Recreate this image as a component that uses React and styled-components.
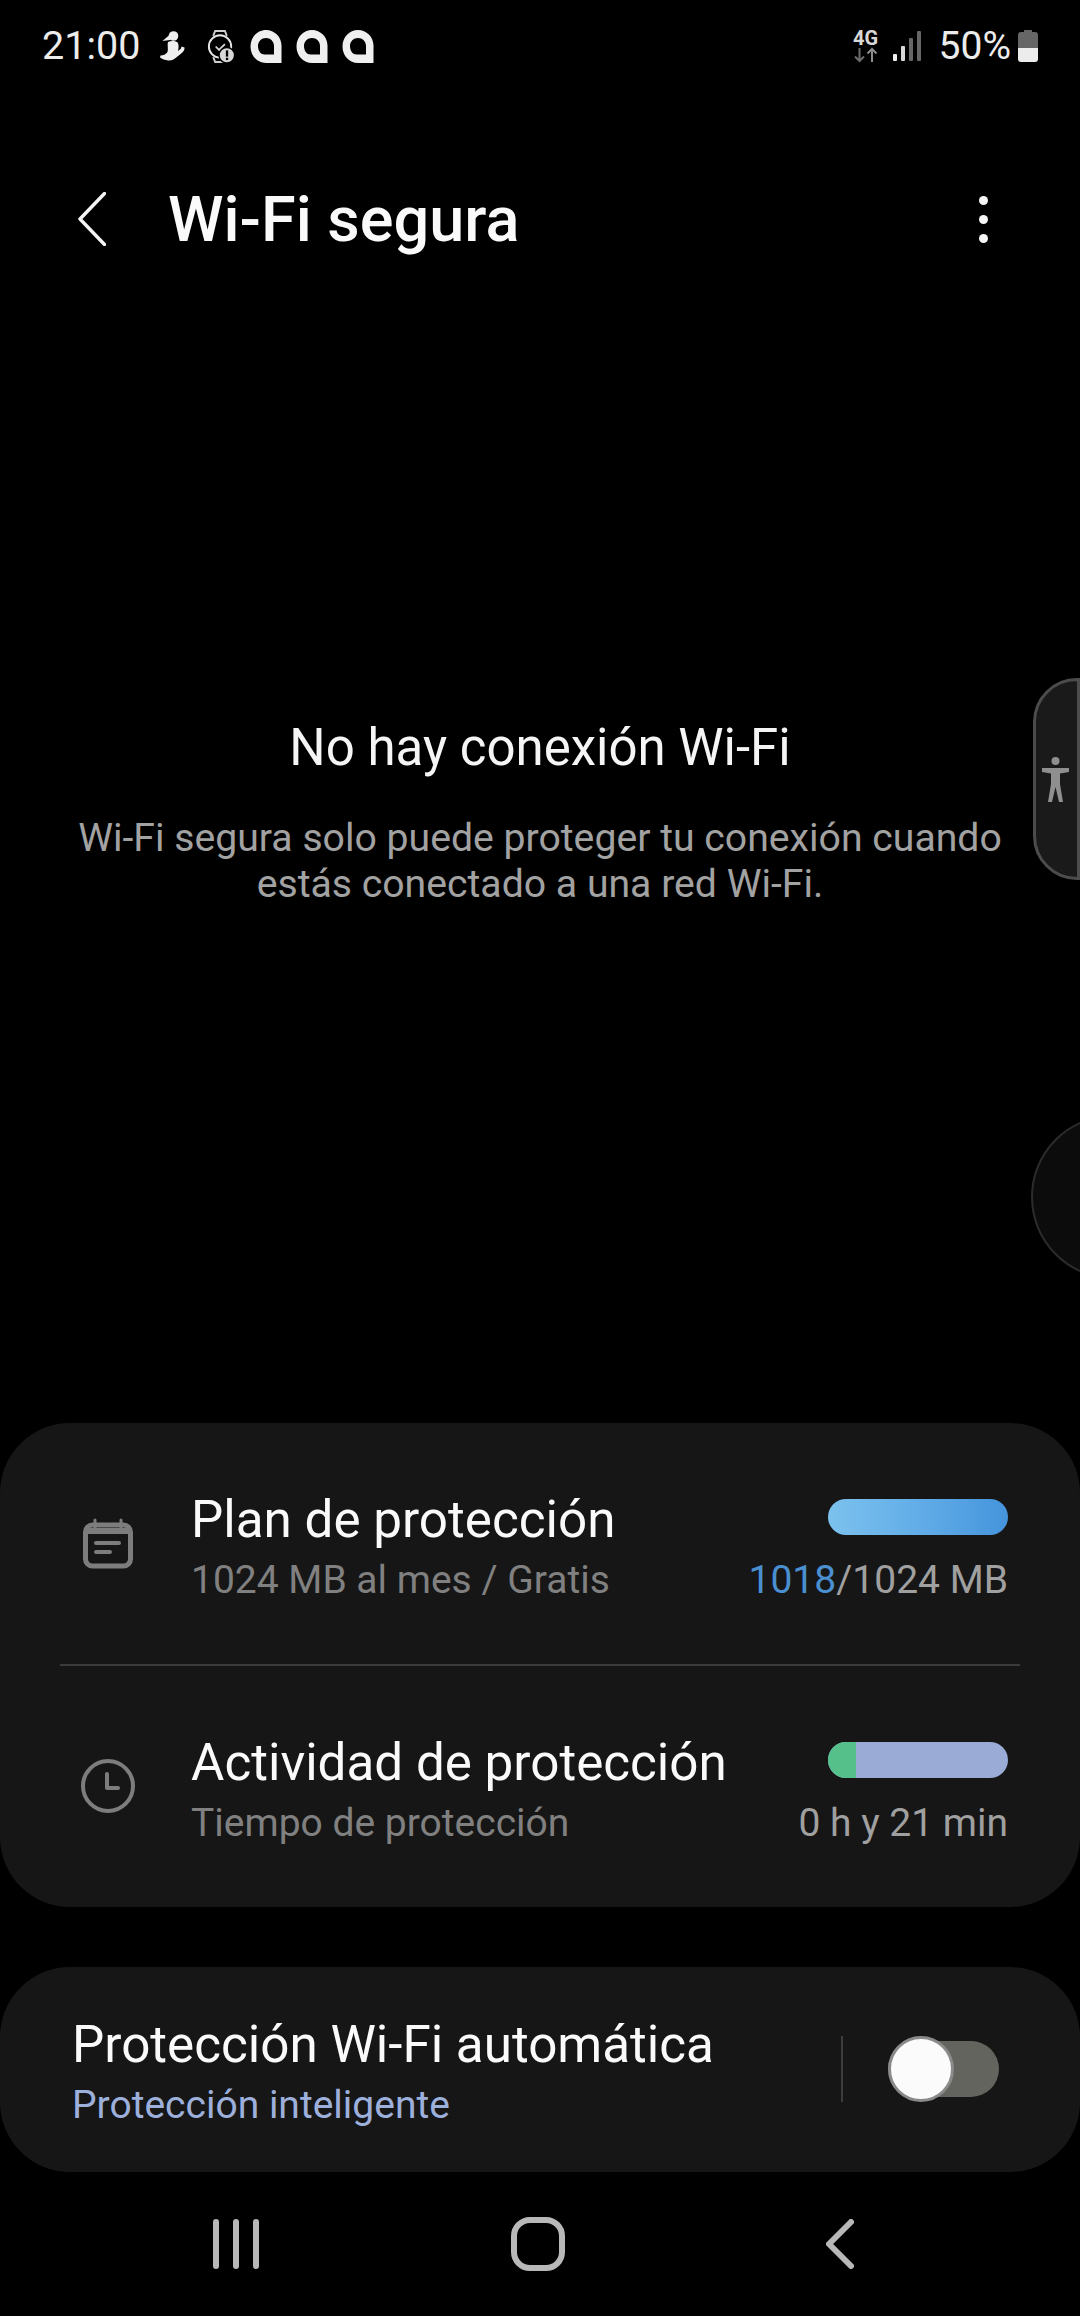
import React from "react";
import styled, { createGlobalStyle } from "styled-components";

const Global = createGlobalStyle`
  html, body { margin: 0; padding: 0; background: #000; }
  body { font-family: Roboto, "Liberation Sans", sans-serif; }
  * { box-sizing: border-box; }
`;

const Page = styled.div`
  position: relative;
  width: 1080px;
  height: 2316px;
  background: #000;
  display: flex;
  flex-direction: column;
  overflow: hidden;
`;

const StatusBar = styled.div`
  height: 92px;
  padding: 0 42px;
  display: flex;
  align-items: center;
  justify-content: space-between;
  color: #ececec;
`;
const StatusGroup = styled.div`
  display: flex;
  align-items: center;
`;
const StatusText = styled.span`
  font-size: ${(p) => p.$size || 39.5}px;
  line-height: 44px;
  font-weight: 400;
  color: #ececec;
  margin-left: ${(p) => p.$ml || 0}px;
`;
const StatusIcon = styled.svg`
  display: block;
  flex: none;
  margin-left: ${(p) => p.$ml || 0}px;
`;
const NetBadge = styled.div`
  width: 28px;
  display: flex;
  flex-direction: column;
  align-items: center;
  margin-right: 13px;
`;
const NetLabel = styled.span`
  font-size: 20px;
  line-height: 17px;
  font-weight: 700;
  color: #d8d8d8;
`;

const Header = styled.header`
  margin-top: 52px;
  height: 150px;
  padding: 0 76px 0 78px;
  display: flex;
  align-items: center;
`;
const BackChevron = styled.svg`
  flex: none;
`;
const Title = styled.h1`
  margin: 0 0 0 62px;
  padding-top: 2px;
  flex: 1;
  font-size: 63px;
  line-height: 72px;
  font-weight: 500;
  color: #fafafa;
`;
const Dots = styled.div`
  display: flex;
  flex-direction: column;
  gap: 10px;
  margin-right: 16px;
`;
const Dot = styled.span`
  width: 9px;
  height: 9px;
  border-radius: 50%;
  background: #f5f5f5;
`;

const Main = styled.main`
  flex: 1;
  display: flex;
  flex-direction: column;
  align-items: center;
  padding-top: 424px;
  text-align: center;
`;
const NoticeTitle = styled.div`
  font-size: 51px;
  line-height: 60px;
  color: #f5f5f5;
`;
const NoticeBody = styled.p`
  margin: 37px 0 0;
  font-size: 39.2px;
  line-height: 46px;
  color: #a2a2a2;
`;

const Card = styled.section`
  background: #161616;
  border-radius: 70px;
`;
const PlainCard = styled(Card)`
  height: 484px;
  display: flex;
  flex-direction: column;
`;
const AutoCard = styled(Card)`
  margin-top: 60px;
  height: 205px;
  padding: 50px 81px 0 72px;
  display: flex;
  justify-content: space-between;
`;
const Row = styled.div`
  flex: 1;
  padding: 69px 72px 0 80px;
  display: flex;
`;
const Divider = styled.div`
  height: 2px;
  margin: 0 60px;
  background: #3b3b3b;
`;
const RowIcon = styled.svg`
  flex: none;
  margin-top: 23px;
  margin-right: 55px;
`;
const TextCol = styled.div`
  flex: 1;
  min-width: 0;
`;
const RowTitle = styled.div`
  font-size: 51.2px;
  line-height: 56px;
  color: #fafafa;
  white-space: nowrap;
`;
const RowSub = styled.div`
  margin-top: 8px;
  font-size: 39px;
  line-height: 48px;
  color: ${(p) => p.$color || "#808080"};
  white-space: nowrap;
`;
const Side = styled.div`
  flex: none;
  display: flex;
  flex-direction: column;
  align-items: flex-end;
`;
const Bar = styled.div`
  width: 180px;
  height: 36px;
  margin-top: 7px;
  border-radius: 18px;
  overflow: hidden;
  background: ${(p) => p.$bg};
`;
const BarFill = styled.div`
  height: 100%;
  background: #56c08b;
`;
const SideValue = styled.div`
  margin-top: 21px;
  font-size: 39px;
  line-height: 48px;
  color: #a0a0a0;
  white-space: nowrap;
`;
const Used = styled.span`
  color: #4a8fd0;
`;
const ToggleArea = styled.div`
  height: 66px;
  margin-top: 19px;
  display: flex;
  align-items: center;
`;
const VLine = styled.div`
  width: 2px;
  height: 66px;
  background: #3d3d3d;
  margin-right: 45px;
`;
const Toggle = styled.div`
  position: relative;
  width: 111px;
  height: 56px;
  border-radius: 28px;
  background: #64645f;
`;
const Knob = styled.div`
  position: absolute;
  left: 0;
  top: -5px;
  width: 66px;
  height: 66px;
  border-radius: 50%;
  background: #fbfbfb;
  border: 3px solid #8a8a8a;
`;

const NavBar = styled.nav`
  height: 144px;
  padding-left: 213px;
  display: flex;
  align-items: center;
`;
const NavIcon = styled.svg`
  flex: none;
  margin-left: ${(p) => p.$ml || 0}px;
`;

const EdgeTab = styled.div`
  position: absolute;
  left: 1033px;
  top: 678px;
  width: 47px;
  height: 202px;
  background: #1a1a1a;
  border: 3px solid #4c4c4c;
  border-radius: 44px 0 0 44px;
  display: flex;
  align-items: center;
  padding-left: 6px;
`;
const EdgeHandle = styled.div`
  position: absolute;
  left: 1031px;
  top: 1115px;
  width: 164px;
  height: 164px;
  background: #0c0c0c;
  border: 2px solid #2c2c2c;
  border-radius: 50%;
`;

const Drop = ({ ml }) => (
  <StatusIcon $ml={ml} width="32" height="33" viewBox="0 0 31 33">
    <path
      fillRule="evenodd"
      fill="#efefef"
      d="M15.5 0C24 0 31 7 31 15.5V33H15.5C7 33 0 26 0 16.5 0 7 7 0 15.5 0ZM15.5 8C11 8 7.5 11.5 7.5 16 7.5 21 10.5 24.5 14 24.5H23.5V16C23.5 11.5 20 8 15.5 8Z"
    />
  </StatusIcon>
);

export default function App() {
  return (
    <Page>
      <Global />
      <StatusBar>
        <StatusGroup>
          <StatusText>21:00</StatusText>
          <StatusIcon $ml={20} width="25" height="30" viewBox="0 0 25 30">
            <circle cx="13.5" cy="5" r="4.8" fill="#efefef" />
            <path d="M10 3.5 2.500 10l7.500-1z" fill="#efefef" />
            <path
              fill="#efefef"
              d="M8 11C11 9.500 16 9.500 18 12 19 15 18.500 18 18 20L21 17.500 21.500 15.500 24.500 16.500C25 20 21 23 18 25 15 28 12 30 8 29.500 5 29 2 28 0 26.500L.5 24.500C3 24.500 6 23.500 7.500 21 8.500 18 7 14 8 11Z"
            />
          </StatusIcon>
          <StatusIcon $ml={22} width="28" height="33" viewBox="0 0 28 34">
            <path d="M6 6 8 1h10l2 5M6 28l2 5h10l2-5" stroke="#cfcfcf" strokeWidth="2" fill="none" />
            <circle cx="13" cy="17" r="11.5" stroke="#e6e6e6" strokeWidth="2" fill="none" />
            <path d="m8.500 17 3.500 3.500 6-6" stroke="#d8d8d8" strokeWidth="1.800" fill="none" />
            <circle cx="20" cy="26" r="8" fill="#d8d8d8" stroke="#000" strokeWidth="1.500" />
            <rect x="19" y="21" width="2.400" height="6.400" fill="#000" />
            <rect x="19" y="28.600" width="2.400" height="2.400" fill="#000" />
          </StatusIcon>
          <Drop ml={15} />
          <Drop ml={14} />
          <Drop ml={14} />
        </StatusGroup>
        <StatusGroup>
          <NetBadge>
            <NetLabel>4G</NetLabel>
            <StatusIcon width="26" height="16" viewBox="0 0 26 16">
              <path d="M6.500 1v13M2 9.500l4.500 4.500L11 9.500" stroke="#6d6d6d" strokeWidth="2" fill="none" />
              <path d="M19 15V2M14.500 6.500 19 2l4.500 4.500" stroke="#8d8d8d" strokeWidth="2" fill="none" />
            </StatusIcon>
          </NetBadge>
          <StatusIcon width="28" height="30" viewBox="0 0 28 30">
            <rect x="0" y="23" width="4" height="7" rx="1" fill="#efefef" />
            <rect x="8" y="15" width="4" height="15" rx="1" fill="#d8d8d8" />
            <rect x="16" y="7" width="4" height="23" rx="1" fill="#666" />
            <rect x="24" y="0" width="4" height="30" rx="1" fill="#666" />
          </StatusIcon>
          <StatusText $ml={18} $size={39}>50%</StatusText>
          <StatusIcon $ml={7} width="20" height="32" viewBox="0 0 20 32">
            <path d="M6 0h8v2h3a3 3 0 0 1 3 3v13H0V5a3 3 0 0 1 3-3h3z" fill="#666" />
            <path d="M0 18h20v11a3 3 0 0 1-3 3H3a3 3 0 0 1-3-3z" fill="#ececec" />
          </StatusIcon>
        </StatusGroup>
      </StatusBar>

      <Header>
        <BackChevron width="28" height="54" viewBox="0 0 28 54">
          <path d="M26.500 1.500 2 27l24.500 25.500" stroke="#f5f5f5" strokeWidth="3.400" strokeLinecap="round" strokeLinejoin="round" fill="none" />
        </BackChevron>
        <Title>Wi-Fi segura</Title>
        <Dots>
          <Dot />
          <Dot />
          <Dot />
        </Dots>
      </Header>

      <Main>
        <NoticeTitle>No hay conexión Wi-Fi</NoticeTitle>
        <NoticeBody>
          Wi-Fi segura solo puede proteger tu conexión cuando
          <br />
          estás conectado a una red Wi-Fi.
        </NoticeBody>
      </Main>

      <PlainCard>
        <Row>
          <RowIcon width="56" height="56" viewBox="0 0 56 56">
            <path d="M15 5v9M41 5v9" stroke="#7d7d7d" strokeWidth="3" strokeLinecap="round" />
            <rect x="5.500" y="10" width="45" height="41" rx="7" fill="none" stroke="#7d7d7d" strokeWidth="5" />
            <path d="M8 13h40v6H8z" fill="#7d7d7d" />
            <path d="M16 28h23M16 37h14" stroke="#7d7d7d" strokeWidth="4" strokeLinecap="round" />
          </RowIcon>
          <TextCol>
            <RowTitle>Plan de protección</RowTitle>
            <RowSub>1024 MB al mes / Gratis</RowSub>
          </TextCol>
          <Side>
            <Bar $bg="linear-gradient(90deg, #7cc2ee 0%, #62ade8 50%, #4594dc 100%)" />
            <SideValue>
              <Used>1018</Used>/1024 MB
            </SideValue>
          </Side>
        </Row>
        <Divider />
        <Row>
          <RowIcon width="56" height="56" viewBox="0 0 56 56">
            <circle cx="28" cy="28" r="25" fill="none" stroke="#7d7d7d" strokeWidth="4" />
            <path d="M27 16v14h11" fill="none" stroke="#7d7d7d" strokeWidth="4" strokeLinecap="round" strokeLinejoin="round" />
          </RowIcon>
          <TextCol>
            <RowTitle>Actividad de protección</RowTitle>
            <RowSub>Tiempo de protección</RowSub>
          </TextCol>
          <Side>
            <Bar $bg="#9aabd6">
              <BarFill style={{ width: `${(21 / 135) * 100}%` }} />
            </Bar>
            <SideValue>0 h y 21 min</SideValue>
          </Side>
        </Row>
      </PlainCard>

      <AutoCard>
        <div>
          <RowTitle>Protección Wi-Fi automática</RowTitle>
          <RowSub $color="#9db0dc">Protección inteligente</RowSub>
        </div>
        <ToggleArea>
          <VLine />
          <Toggle>
            <Knob />
          </Toggle>
        </ToggleArea>
      </AutoCard>

      <NavBar>
        <NavIcon width="46" height="50" viewBox="0 0 46 50">
          <path d="M3 3v44M23 3v44M43 3v44" stroke="#b8b8b8" strokeWidth="6" strokeLinecap="round" fill="none" />
        </NavIcon>
        <NavIcon $ml={252} width="54" height="54" viewBox="0 0 54 54">
          <rect x="3" y="3" width="48" height="48" rx="16" fill="none" stroke="#b8b8b8" strokeWidth="6" />
        </NavIcon>
        <NavIcon $ml={261} width="28" height="50" viewBox="0 0 28 50">
          <path d="M25 3 3 25l22 22" stroke="#b8b8b8" strokeWidth="6" strokeLinecap="round" strokeLinejoin="round" fill="none" />
        </NavIcon>
      </NavBar>

      <EdgeTab>
        <svg width="27" height="45" viewBox="0 0 27 45">
          <circle cx="13.500" cy="4" r="4" fill="#8f8f8f" />
          <path d="M0 11h27v4l-9 1.500V27l3 18h-4l-3.500-15L10 45H6l3-18V16.500L0 15z" fill="#8f8f8f" />
        </svg>
      </EdgeTab>
      <EdgeHandle />
    </Page>
  );
}
